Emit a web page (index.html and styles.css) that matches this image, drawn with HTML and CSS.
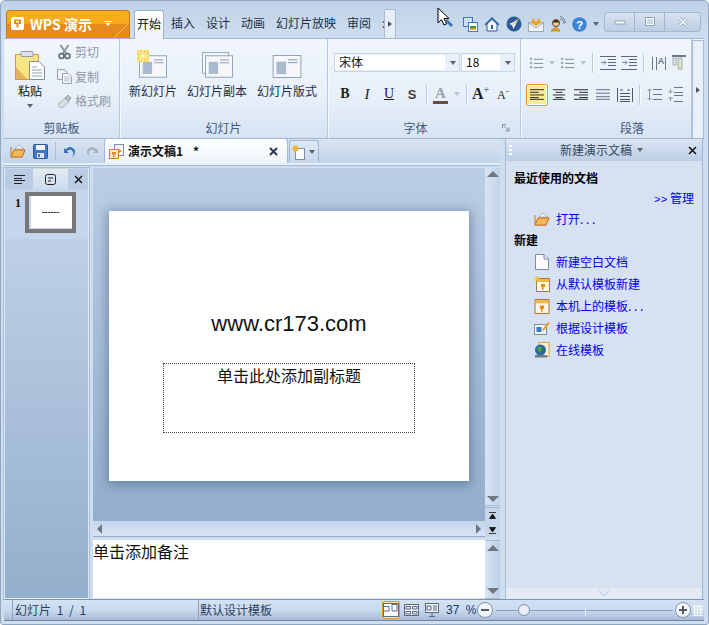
FILE: index.html
```html
<!DOCTYPE html>
<html lang="zh">
<head>
<meta charset="utf-8">
<title>WPS 演示</title>
<link rel="stylesheet" href="styles.css">
</head>
<body>
<svg class="defs" width="0" height="0">
  <defs>
    <symbol id="folder" viewBox="0 0 16 14"><path d="M1 3V13H12L15 6H4L2 12" fill="#f7c66a" stroke="#c8781c"/><path d="M5 5L9 1L14 5Z" fill="#fff" stroke="#8a99ad" stroke-width=".7"/><path d="M1 13L4 6H15L12 13Z" fill="#f5b858" stroke="#c8781c"/></symbol>
    <symbol id="slideicon" viewBox="0 0 30 24"><rect x=".5" y=".5" width="29" height="23" fill="#f5f7fb" stroke="#8d9fb8"/><rect x="4" y="7" width="10" height="13" fill="#a9b9d0"/><path d="M16 5h10M16 8h10" stroke="#8296b4"/></symbol>
    <symbol id="lines" viewBox="0 0 16 12"><path d="M0 .5H16M0 4.500H16M0 8.500H16M0 11.500H16" stroke="currentColor" fill="none"/></symbol>
    <symbol id="linesc" viewBox="0 0 16 12"><path d="M1 .5H15M4 3.500H12M1 6.500H15M4 9.500H12M1 11.500H15" stroke="currentColor" fill="none"/></symbol>
    <symbol id="linesl" viewBox="0 0 16 12"><path d="M0 .5H16M0 3.500H10M0 6.500H16M0 9.500H10M0 11.500H16" stroke="currentColor" fill="none"/></symbol>
    <symbol id="linesr" viewBox="0 0 16 12"><path d="M0 .5H16M6 3.500H16M0 6.500H16M6 9.500H16M0 11.500H16" stroke="currentColor" fill="none"/></symbol>
    <symbol id="bullets" viewBox="0 0 18 14"><path d="M1 2h3M2.500 .5v3M1 7h3M2.500 5.500v3M1 12h3M2.500 10.500v3" stroke="#7a8797"/><path d="M6 2.500H17M6 7.500H17M6 12.500H17" stroke="#6c7888"/></symbol>
    <symbol id="indent" viewBox="0 0 16 14"><path d="M0 .5H16M8 3.500H16M8 6.500H16M8 9.500H16M0 13.500H16" stroke="#59677a"/><path d="M1 6.500H6M4 4.500L6 6.500L4 8.500" stroke="#7a8797" fill="none"/></symbol>
    <symbol id="doc" viewBox="0 0 14 16"><path d="M.5 .5H9L13.500 5V15.500H.5Z" fill="#fbfcfe" stroke="#7d8da3"/><path d="M9 .5V5H13.500" fill="#dfe6ef" stroke="#7d8da3"/></symbol>
    <symbol id="tmpl" viewBox="0 0 14 14"><rect x=".5" y=".5" width="13" height="13" fill="#fff8e8" stroke="#a87c3c"/><rect x="1" y="1" width="12" height="3" fill="#f5b64a"/><path d="M5 6h4v3H7.500v3H6V9H5Z" fill="#e88c10"/></symbol>
  </defs>
</svg>

<div class="window">
  <header class="titlebar">
    <div class="appbtn">
      <span class="applogo"><svg width="13" height="13" viewBox="0 0 13 13"><rect width="13" height="13" rx="2" fill="#fff"/><path d="M3 2.500H10V7H7.500V10.500H5.500V7H3Z" fill="#e88c1a"/><rect x="5" y="4" width="3" height="1.500" fill="#fff"/></svg></span>
      <span class="appname">WPS 演示</span>
      <span class="apparrow"></span>
    </div>
    <nav class="tabs">
      <span class="tab active">开始</span>
      <span class="tab">插入</span>
      <span class="tab">设计</span>
      <span class="tab">动画</span>
      <span class="tab">幻灯片放映</span>
      <span class="tab">审阅</span>
      <span class="tabmore">:</span>
      <span class="tabnext"><i class="tri-right"></i></span>
    </nav>
    <div class="titleicons">
      <svg width="15" height="15" viewBox="0 0 15 15"><rect x=".5" y=".5" width="9" height="9" fill="#cfe0f5" stroke="#3d78c0"/><rect x="5.500" y="5.500" width="9" height="9" fill="#fff" stroke="#3d78c0"/><rect x="7" y="9" width="6" height="2" fill="#3a9a3a"/><rect x="7" y="11" width="6" height="2" fill="#e8a020"/></svg>
      <svg width="16" height="15" viewBox="0 0 16 15"><path d="M1 8L8 1L15 8" fill="none" stroke="#2c5f9e" stroke-width="1.500"/><path d="M3 7V14H13V7L8 2.500Z" fill="#f4f8fc" stroke="#2c5f9e"/><rect x="7" y="8" width="2" height="4" fill="#2c5f9e"/></svg>
      <svg width="16" height="16" viewBox="0 0 16 16"><circle cx="8" cy="8" r="7.500" fill="#2a5d96"/><path d="M12.500 3L6.500 6.500L3 8L6 9L7.500 13Z" fill="#f2f6fb"/><path d="M12.500 3L7 9" stroke="#e0a030"/></svg>
      <svg width="16" height="15" viewBox="0 0 16 15"><rect x=".5" y="5.500" width="15" height="9" fill="#eef1f6" stroke="#9aa8bb"/><path d="M1 6L8 11L15 6" fill="none" stroke="#9aa8bb"/><path d="M3 6L5 1L8 5L11 1L13 6L8 9Z" fill="#eda526"/></svg>
      <svg width="16" height="16" viewBox="0 0 16 16"><circle cx="6" cy="7" r="3.500" fill="#f3cf9d" stroke="#5a3b1c"/><path d="M2.500 6.500Q6 1 9.500 6.500" fill="#3a2a18"/><path d="M1 15Q6 8 10 15Z" fill="#e8a020" stroke="#8a5a10" stroke-width=".5"/><path d="M10 3A5 5 0 0 1 14 8M10 .5A8 8 0 0 1 15.500 7" fill="none" stroke="#6a7a90"/></svg>
      <svg width="15" height="15" viewBox="0 0 14 14"><circle cx="7" cy="7" r="6.800" fill="#3f86d6"/><text x="7" y="11" class="helpq" text-anchor="middle">?</text></svg>
      <i class="tri-down"></i>
    </div>
    <div class="winbtns">
      <span class="winbtn"><svg width="12" height="12" viewBox="0 0 12 12"><rect x="1" y="5" width="10" height="3" fill="#fff" stroke="#8ba2bf"/></svg></span>
      <span class="winbtn"><svg width="12" height="12" viewBox="0 0 12 12"><rect x="1.500" y="1.500" width="9" height="8" fill="none" stroke="#8ba2bf"/><rect x="2.500" y="2.500" width="7" height="6" fill="none" stroke="#fff"/></svg></span>
      <span class="winbtn"><svg width="12" height="12" viewBox="0 0 12 12"><path d="M2 2L10 10M10 2L2 10" stroke="#8ba2bf" stroke-width="3"/><path d="M2 2L10 10M10 2L2 10" stroke="#fff" stroke-width="1.500"/></svg></span>
    </div>
  </header>

  <section class="ribbon">
    <div class="group g-clip">
      <div class="groupbody clip-body">
        <div class="paste">
          <svg width="30" height="32" viewBox="0 0 30 32"><rect x=".5" y="4.500" width="23" height="25" fill="#f7e487" stroke="#d99a3c"/><path d="M1 29V17L12 29Z" fill="#e4b45c"/><rect x="6" y="1.500" width="12" height="5" rx="1" fill="#dfe4ea" stroke="#8d99a8"/><path d="M14.500 11.500H24L29.500 17V29.500H14.500Z" fill="#fff" stroke="#7d8da3"/><path d="M17 17H22M17 20H27M17 23H27M17 26H27" stroke="#8d9fb8"/></svg>
          <span class="pastelabel">粘贴</span>
          <i class="tri-down"></i>
        </div>
        <div class="cliplist">
          <div class="clipitem"><svg width="14" height="16" viewBox="0 0 14 16"><path d="M3 1L9 10M11 1L5 10" stroke="#8c96a3" stroke-width="2"/><circle cx="4" cy="12" r="2.500" fill="none" stroke="#5e6773" stroke-width="1.500"/><circle cx="10" cy="12" r="2.500" fill="none" stroke="#5e6773" stroke-width="1.500"/></svg><span>剪切</span></div>
          <div class="clipitem"><svg width="15" height="15" viewBox="0 0 15 15"><path d="M.5 .5H7L10 3V10.500H.5Z" fill="#eef1f5" stroke="#99a3af"/><path d="M5.500 4.500H11L14.500 8V14.500H5.500Z" fill="#f7f9fb" stroke="#99a3af"/><path d="M7 8H12M7 10H13M7 12H13" stroke="#b3bcc7"/></svg><span>复制</span></div>
          <div class="clipitem"><svg width="15" height="15" viewBox="0 0 15 15"><path d="M1 10L8 4L12 8L5 14Q2 14 1 10Z" fill="#d9dde2" stroke="#aab2bc"/><path d="M8 4L11 1L14 4L12 7Z" fill="#b9c0c9" stroke="#99a3af"/></svg><span>格式刷</span></div>
        </div>
      </div>
      <div class="grouplabel">剪贴板</div>
    </div>

    <div class="group g-slide">
      <div class="groupbody slide-body">
        <div class="bigbtn"><span class="iconbox"><svg width="28" height="23"><use href="#slideicon"/></svg><svg class="burst" width="12" height="12" viewBox="0 0 12 12"><rect width="12" height="12" fill="#f5d860"/><path d="M6 0V12M0 6H12M1 1L11 11M11 1L1 11" stroke="#fff6c0"/></svg></span><span>新幻灯片</span></div>
        <div class="bigbtn"><span class="iconbox stacked"><svg width="27" height="22"><use href="#slideicon"/></svg><svg class="front" width="28" height="23"><use href="#slideicon"/></svg></span><span>幻灯片副本</span></div>
        <div class="bigbtn"><span class="iconbox"><svg width="30" height="23"><use href="#slideicon"/></svg></span><span>幻灯片版式</span></div>
      </div>
      <div class="grouplabel">幻灯片</div>
    </div>

    <div class="group g-font">
      <div class="groupbody font-body">
        <div class="fontrow">
          <div class="combo c-name"><span class="comboval">宋体</span><i class="tri-down"></i></div>
          <div class="combo c-size"><span class="comboval">18</span><i class="tri-down"></i></div>
        </div>
        <div class="fontfmt">
          <b class="f-b">B</b><i class="f-i">I</i><u class="f-u">U</u><span class="f-s">S</span>
          <span class="sep"></span>
          <span class="f-color">A</span><i class="tri-down pale"></i>
          <span class="sep"></span>
          <span class="f-grow">A<sup>+</sup></span><span class="f-shrink">A<sup>-</sup></span>
        </div>
      </div>
      <div class="grouplabel label-font">字体<svg class="launcher" width="8" height="8" viewBox="0 0 8 8"><path d="M.5 4V.5H4M2 2L7 7M7 3.500V7H3.500" fill="none" stroke="#7b8da5"/></svg></div>
    </div>

    <div class="group g-para">
      <div class="groupbody para-body">
        <div class="pararow r1">
          <svg width="15" height="14"><use href="#bullets"/></svg><i class="tri-down pale"></i>
          <svg width="15" height="14"><use href="#bullets"/></svg><i class="tri-down pale"></i>
          <span class="sep"></span>
          <svg width="16" height="14"><use href="#indent"/></svg>
          <svg width="16" height="14"><use href="#indent"/></svg>
          <span class="sep"></span>
          <svg width="16" height="15" viewBox="0 0 16 15"><path d="M1.500 1V14M5.500 1V14M14.500 1V14" stroke="#6c7888"/><text x="10" y="8" class="miniA" text-anchor="middle">A</text></svg>
          <svg width="15" height="16" viewBox="0 0 15 16"><rect y="0" width="14" height="2" fill="#6c7888"/><rect x="1" y="3" width="3" height="7" fill="#e2e6ea" stroke="#8b95a2" stroke-width=".7"/><rect x="6" y="3" width="4" height="11" fill="#dde2c8" stroke="#8b95a2" stroke-width=".7"/></svg>
        </div>
        <div class="pararow r2">
          <span class="alignbtn on"><svg width="14" height="11"><use href="#linesl"/></svg></span>
          <span class="alignbtn"><svg width="14" height="11"><use href="#linesc"/></svg></span>
          <span class="alignbtn"><svg width="14" height="11"><use href="#linesr"/></svg></span>
          <span class="alignbtn mute"><svg width="14" height="11"><use href="#lines"/></svg></span>
          <span class="alignbtn mute"><svg width="16" height="14" viewBox="0 0 16 14"><path d="M.5 0V14M15.500 0V14M3 5.500H13M3 8.500H13M3 11.500H13M3 13.500H13M3 2H6M10 2H13" stroke="#4a5768" fill="none"/></svg></span>
          <span class="sep"></span>
          <svg class="gapicon" width="15" height="13" viewBox="0 0 15 13"><path d="M6 1.500H15M6 6.500H15M6 11.500H15" stroke="#6c7888"/><path d="M2.500 1V12M.5 3L2.500 1L4.500 3M.5 10L2.500 12L4.500 10" stroke="#8b95a2" fill="none"/></svg>
          <svg class="gapicon" width="15" height="16" viewBox="0 0 15 16"><path d="M6 .5H15M6 5.500H15M6 8.500H15M6 14.500H15" stroke="#6c7888"/><path d="M2.500 2V6M2.500 10V14M.5 4L2.500 6L4.500 4M.5 12L2.500 10L4.500 12" stroke="#8b95a2" fill="none"/></svg>
        </div>
      </div>
      <div class="grouplabel label-para">段落</div>
    </div>

    <div class="ribbonmore"><i class="tri-right"></i></div>
  </section>

  <div class="workspace">
    <div class="docside">
      <div class="doctabs">
        <div class="quick">
          <svg width="16" height="14"><use href="#folder"/></svg>
          <svg width="15" height="15" viewBox="0 0 15 15"><rect x=".5" y=".5" width="14" height="14" rx="1" fill="#3f78c8" stroke="#2a5a9e"/><rect x="3" y="1" width="9" height="5" fill="#eef3fa"/><rect x="4" y="9" width="7" height="5" fill="#dfe8f4"/><rect x="5" y="10" width="2" height="3" fill="#3f78c8"/></svg>
          <span class="qsep"></span>
          <svg width="13" height="13" viewBox="0 0 13 13"><path d="M1 3V8H6L4 6Q8 3 10 7Q11 9 9 12Q14 8 11 4Q7 0 2.500 4.500Z" fill="#3d74b8"/></svg>
          <svg class="redo" width="13" height="13" viewBox="0 0 13 13"><path d="M12 3V8H7L9 6Q5 3 3 7Q2 9 4 12Q-1 8 2 4Q6 0 10.500 4.500Z" fill="#a9b0b8"/></svg>
        </div>
        <div class="doctab">
          <svg width="15" height="15" viewBox="0 0 15 15"><rect x="5.500" y=".5" width="9" height="11" fill="#f3f6fa" stroke="#7f8fa5"/><rect x=".5" y="5.500" width="9" height="9" fill="#ffe9c8" stroke="#d8801c"/><path d="M3 8h4v2.500H5.500V13H4V10.500H3Z" fill="#e88c10"/><path d="M10 5L13 7L10 9Z" fill="#e88c10"/></svg>
          <span class="docname">演示文稿1</span><span class="docmark">*</span>
          <svg class="docx" width="9" height="9" viewBox="0 0 9 9"><path d="M1 1L8 8M8 1L1 8" stroke="#2a3a50" stroke-width="2"/></svg>
        </div>
        <div class="newtab">
          <svg width="14" height="15" viewBox="0 0 14 15"><rect x="3.500" y="3.500" width="9" height="11" fill="#fbfcfe" stroke="#7d8da3"/><circle cx="3.500" cy="3.500" r="3" fill="#f2b632"/></svg>
          <i class="tri-down"></i>
        </div>
      </div>

      <div class="docarea">
        <aside class="thumbs">
          <div class="thumbtabs">
            <span class="ttab"><svg width="11" height="9" viewBox="0 0 11 9"><path d="M0 .5H11M0 3.500H8M0 5.500H11M0 8.500H8" stroke="#222"/></svg></span>
            <span class="ttab active"><svg width="11" height="11" viewBox="0 0 11 11"><rect x=".5" y=".5" width="10" height="10" rx="2" fill="none" stroke="#222"/><path d="M3 4H8M3 7H6" stroke="#222"/></svg></span>
            <span class="ttab close"><svg width="9" height="9" viewBox="0 0 9 9"><path d="M1 1L8 8M8 1L1 8" stroke="#1a1a1a" stroke-width="1.500"/></svg></span>
          </div>
          <div class="thumblist">
            <span class="thumbnum">1</span>
            <div class="thumb"><div class="thumbpage"><span class="thumbtext"></span></div></div>
          </div>
        </aside>

        <main class="editor">
          <div class="stage-row">
            <div class="stage-col">
              <div class="stage">
                <div class="slide">
                  <div class="slidetitle">www.cr173.com</div>
                  <div class="slidesub">单击此处添加副标题</div>
                </div>
              </div>
              <div class="hscroll"><i class="tri-left"></i><i class="tri-right big"></i></div>
            </div>
            <div class="vscroll">
              <div class="vtrack"><i class="tri-up"></i><i class="tri-down big"></i></div>
              <div class="vpage"><svg width="7" height="7" viewBox="0 0 7 7"><path d="M0 .5H7M3.500 2L.5 6.500H6.500Z" stroke="#111" stroke-width=".8" fill="#111"/></svg><svg width="7" height="7" viewBox="0 0 7 7"><path d="M0 6.500H7M3.500 5L.5 .5H6.500Z" stroke="#111" stroke-width=".8" fill="#111"/></svg></div>
            </div>
          </div>
          <div class="notes-row">
            <div class="notes">单击添加备注</div>
            <div class="vscroll2"><i class="tri-up"></i><i class="tri-down big"></i></div>
          </div>
        </main>
      </div>
    </div>

    <aside class="taskpane">
      <div class="panehead">
        <span class="panegrip"></span>
        <span class="panetitle">新建演示文稿</span><i class="tri-down"></i>
        <svg class="paneclose" width="9" height="9" viewBox="0 0 9 9"><path d="M1 1L8 8M8 1L1 8" stroke="#111" stroke-width="1.500"/></svg>
      </div>
      <div class="panebody">
        <h2 class="panehd">最近使用的文档</h2>
        <div class="manage"><span class="dbl">&gt;&gt;</span> 管理</div>
        <a class="paneitem first"><svg width="16" height="14"><use href="#folder"/></svg><span>打开. . .</span></a>
        <h2 class="panehd second">新建</h2>
        <a class="paneitem"><svg width="14" height="16"><use href="#doc"/></svg><span>新建空白文档</span></a>
        <a class="paneitem"><svg width="16" height="16" viewBox="0 0 16 16"><use href="#tmpl" x="2" y="2" width="14" height="14"/><path d="M3 0V6M0 3H6M1 1L5 5M5 1L1 5" stroke="#f2c230"/></svg><span>从默认模板新建</span></a>
        <a class="paneitem"><svg width="14" height="15"><use href="#tmpl"/></svg><span>本机上的模板. . .</span></a>
        <a class="paneitem"><svg width="16" height="14" viewBox="0 0 16 14"><rect x=".5" y="3.500" width="12" height="10" fill="#f2f6fb" stroke="#7d8da3"/><rect x="2.500" y="6" width="5" height="5" fill="#3f78c8"/><path d="M8 9L14 1L15.500 2.500L9.500 10Z" fill="#e8a020"/></svg><span>根据设计模板</span></a>
        <a class="paneitem"><svg width="16" height="16" viewBox="0 0 16 16"><rect x="5" y=".5" width="10" height="14" fill="#fff2d0" stroke="#d8a040"/><circle cx="6.500" cy="8" r="5.500" fill="#2a6a9e"/><path d="M3 6Q6 3 8 7L6 11Z" fill="#5aa83c"/><rect x="1" y="13" width="12" height="2.500" fill="#6c7888"/></svg><span>在线模板</span></a>
        <div class="panespacer"></div>
        <div class="panefoot"><svg width="12" height="7" viewBox="0 0 12 7"><path d="M1 .5L6 6L11 .5" fill="none" stroke="#b4c3d8"/></svg></div>
      </div>
    </aside>
  </div>

  <footer class="statusbar">
    <span class="st st-page">幻灯片 1 / 1</span>
    <span class="st st-tmpl">默认设计模板</span>
    <span class="viewbtn on"><svg width="16" height="14" viewBox="0 0 16 14"><rect x=".5" y=".5" width="15" height="13" fill="#fff" stroke="#5a6a80"/><path d="M1 3.500H6V8H1M9 1.500H14V8H9Z" fill="none" stroke="#5a6a80"/></svg></span>
    <span class="viewbtn"><svg width="15" height="12" viewBox="0 0 15 12"><rect x=".5" y=".5" width="14" height="11" fill="#eef2f8" stroke="#5a6a80"/><path d="M2 2.500H6.500V5H2ZM8.500 2.500H13V5H8.500ZM2 7.500H6.500V10H2ZM8.500 7.500H13V10H8.500Z" fill="none" stroke="#5a6a80"/></svg></span>
    <span class="viewbtn"><svg width="14" height="14" viewBox="0 0 14 14"><rect x=".5" y=".5" width="13" height="9" fill="#eef2f8" stroke="#5a6a80"/><path d="M2 3H6V7H2ZM8 3H12M8 5H12M8 7H12M7 10V13M4 13.500H10" fill="none" stroke="#5a6a80"/></svg></span>
    <span class="zoompct">37 %</span>
    <span class="zoomcirc"><i class="minus"></i></span>
    <span class="slider"><span class="tick"></span><span class="thumbknob"></span></span>
    <span class="zoomcirc"><i class="plus"></i></span>
    <span class="grip"></span>
  </footer>

  <svg class="cursor" width="16" height="21" viewBox="0 0 16 21"><path d="M1 1V16L4.500 12.500L7 18L9.500 17L7 11.500H12Z" fill="#fff" stroke="#000"/><path d="M9 13L15 19" stroke="#3d74b8" stroke-width="3"/></svg>
</div>
</body>
</html>
```
FILE: styles.css
```css
* { box-sizing: border-box; }
html, body { margin: 0; padding: 0; }
body {
  width: 709px; height: 625px; overflow: hidden; background: #fff;
  font-family: "Noto Sans CJK SC", "Liberation Sans", sans-serif;
  font-size: 12px; line-height: 14px; color: #1f3550;
}
i { display: inline-block; font-style: normal; }
.defs { position: absolute; }
svg { display: block; flex: none; }

.tri-down { flex: none; width: 0; height: 0; border: 3px solid transparent; border-top: 4px solid #5a6472; border-bottom: 0; }
.tri-down.pale { border-top-color: #b9c3d0; }
.tri-down.big { border-width: 6px 6px 0; border-color: #6f7780 transparent transparent; border-style: solid; }
.tri-right { width: 0; height: 0; border-style: solid; border-width: 3px 0 3px 4px; border-color: transparent transparent transparent #4a5462; }
.tri-right.big { border-width: 5px 0 5px 5px; border-left-color: #6f7780; }
.tri-left { width: 0; height: 0; border-style: solid; border-width: 5px 5px 5px 0; border-color: transparent #6f7780 transparent transparent; }
.tri-up { width: 0; height: 0; border-style: solid; border-width: 0 6px 6px; border-color: transparent transparent #6f7780; }

.window {
  position: relative; width: 709px; height: 625px; display: flex; flex-direction: column;
  padding: 0 4px 3px 3px; border: 1px solid #8ea6c2; border-radius: 5px 5px 3px 3px;
  background: linear-gradient(#c0d2e8 0, #cfdeef 40px, #cfdeef 100%);
}
.titlebar { height: 37px; flex: none; display: flex; align-items: flex-end; padding-left: 2px; }
.appbtn {
  width: 124px; height: 28px; flex: none; display: flex; align-items: center; padding: 0 0 2px 4px; margin-right: 4px;
  border: 1px solid #c47a14; border-bottom: 0; border-radius: 4px 4px 0 0;
  background: linear-gradient(-45deg, transparent 10px, #f6c56a 10px, #f6c56a 11px, transparent 11px), linear-gradient(#f7b01f 0, #f5a81a 50%, #e88a1c 50%, #e68a1e 100%);
}
.appname { margin-left: 6px; color: #fff; font: bold 14px/16px "Noto Sans CJK SC", "Liberation Sans", sans-serif; white-space: nowrap; }
.apparrow { margin-left: 12px; width: 8px; height: 5px; border-top: 1px solid #fff; position: relative; flex: none; }
.apparrow::after { content: ""; position: absolute; left: 1px; top: 1px; border: 3px solid transparent; border-top: 3px solid #fff; border-bottom: 0; }
.tabs { height: 28px; flex: none; display: flex; align-items: flex-start; position: relative; z-index: 1; }
.tab { flex: none; height: 28px; line-height: 26px; margin-right: 11px; color: #1d2f48; white-space: nowrap; }
.tab.active {
  width: 30px; height: 29px; margin-right: 7px; text-align: center; color: #111;
  background: linear-gradient(#fff, #eef3fb); border: 1px solid #9db3cf; border-bottom: 0; border-radius: 3px 3px 0 0;
}
.tabmore { color: #333; width: 2px; line-height: 26px; flex: none; }
.tabnext { width: 12px; height: 29px; flex: none; margin-top: -1px; display: flex; align-items: center; justify-content: center; background: #e6eefa; border: 1px solid #a7bbd4; border-bottom: 0; border-radius: 2px 2px 0 0; }
.titleicons { display: flex; align-items: center; height: 18px; gap: 6px; margin: 0 0 5px auto; }
.helpq { font: bold 11px "Liberation Sans", sans-serif; fill: #fff; }
.winbtns { flex: none; display: flex; margin: 0 3px 6px 5px; height: 20px; border: 1px solid #a3b7d0; border-radius: 3px; background: linear-gradient(#d8e3f1, #bccde3); }
.winbtn { width: 30px; display: flex; align-items: center; justify-content: center; border-right: 1px solid #a3b7d0; }
.winbtn:last-child { width: 35px; border-right: 0; }

.ribbon { height: 100px; flex: none; display: flex; border-top: 1px solid #a3b9d3; background: linear-gradient(#f1f6fd 0, #e7eff9 60px, #d6e3f3 100%); }
.group { flex: none; display: flex; flex-direction: column; border-right: 1px solid #b7c9de; box-shadow: 1px 0 0 #f4f8fd; }
.groupbody { flex: 1; min-height: 0; }
.grouplabel { height: 20px; flex: none; line-height: 19px; text-align: center; color: #41587a; position: relative; }
.label-font { padding-right: 17px; }
.label-para { padding-left: 52px; }
.g-clip { width: 116px; }
.g-slide { width: 208px; }
.g-font { width: 193px; }
.g-para { width: 171px; }
.clip-body { display: flex; padding: 11px 0 0 11px; }
.paste { width: 30px; flex: none; display: flex; flex-direction: column; align-items: center; }
.pastelabel { color: #111; line-height: 18px; white-space: nowrap; }
.paste .tri-down { margin-top: 4px; }
.cliplist { margin: -6px 0 0 12px; display: flex; flex-direction: column; gap: 8.500px; }
.clipitem { display: flex; align-items: center; height: 16px; gap: 3px; color: #8e98a6; white-space: nowrap; }
.clipitem svg { width: 15px; }
.slide-body { display: flex; padding: 11px 0 0 9px; gap: 10px; }
.bigbtn { display: flex; flex-direction: column; align-items: center; color: #1d2f48; white-space: nowrap; }
.iconbox { position: relative; height: 30px; margin-bottom: 4px; display: block; padding-top: 5px; }
.burst { position: absolute; left: -2px; top: 0; }
.iconbox.stacked { padding-top: 2px; width: 31px; }
.iconbox.stacked .front { position: absolute; left: 3px; top: 5px; }
.font-body { padding: 14px 0 0 6px; }
.fontrow { display: flex; gap: 1px; }
.combo { height: 19px; flex: none; display: flex; align-items: center; border: 1px solid #c9d6e8; background: #e9f0f9; }
.comboval { flex: 1; height: 15px; line-height: 14px; background: #fff; padding-left: 4px; color: #111; margin-right: 5px; }
.combo .tri-down { margin-right: 3px; }
.c-name { width: 126px; }
.c-size { width: 54px; }
.fontfmt { display: flex; align-items: center; height: 22px; margin-top: 11px; color: #1c1c1c; }
.f-b, .f-i, .f-u, .f-s { width: 22px; flex: none; text-align: center; display: block; }
.f-b { font: bold 14px "Liberation Serif", serif; }
.f-i { font: italic 15px "Liberation Serif", serif; }
.f-u { font: 14px "Liberation Serif", serif; }
.f-s { margin-left: 1px; font: bold 13px "Liberation Sans", sans-serif; color: #4b3c36; }
.sep { width: 1px; height: 20px; background: #bccbdd; box-shadow: 1px 0 0 #f6f9fd; flex: none; }
.f-s + .sep { margin-left: 3px; }
.f-color { margin-left: 6px; width: 15px; flex: none; text-align: center; font: bold 15px/16px "Liberation Serif", serif; color: #9aa3ae; border-bottom: 3px solid #6b4a40; }
.fontfmt .tri-down.pale { margin: 0 6px; }
.f-grow { margin-left: 5px; width: 23px; flex: none; font: bold 16px "Liberation Serif", serif; color: #1a2030; white-space: nowrap; }
.f-shrink { font: 12px "Liberation Serif", serif; width: 16px; flex: none; margin: 3px 0 0 2px; color: #1a2030; white-space: nowrap; }
.fontfmt sup { font-size: 10px; line-height: 0; color: #3d78c0; }
.launcher { position: absolute; right: 10px; top: 6px; }
.para-body { padding: 15px 0 0 8px; }
.pararow { display: flex; align-items: center; }
.r1 { height: 18px; gap: 5px; }
.r1 .sep { margin: 0 2px 0 1px; }
.miniA { font: bold 9px "Liberation Sans", sans-serif; fill: #6c7888; }
.r2 { height: 23px; margin-top: 11px; margin-left: -3px; }
.alignbtn { width: 22px; height: 22px; flex: none; display: flex; align-items: center; justify-content: center; color: #111; border: 1px solid transparent; }
.alignbtn.on { border: 1px solid #e8952a; border-radius: 2px; background: #fcea9a; box-shadow: inset 0 0 0 1px #fff; }
.alignbtn.mute { color: #55606e; }
.r2 .sep { margin: 0 7px 0 3px; }
.gapicon { margin-right: 6px; }
.ribbonmore { width: 12px; flex: none; display: flex; align-items: center; justify-content: center; background: #e8eff9; border: 1px solid #a7bbd4; border-bottom: 0; margin-top: 1px; }

.workspace { flex: 1; min-height: 0; display: flex; border-top: 1px solid #a3b9d3; }
.docside { width: 496px; flex: none; display: flex; flex-direction: column; }
.doctabs { height: 26px; flex: none; display: flex; align-items: flex-end; background: linear-gradient(#d8e4f3, #c3d4e9); border-bottom: 2px solid #e6eef8; box-shadow: 0 1px 0 #a3b9d3; }
.quick { display: flex; align-items: center; gap: 7px; height: 24px; padding-left: 6px; width: 100px; flex: none; }
.redo { margin-left: 3px; }
.qsep { width: 1px; height: 18px; background: #adc0d8; }
.doctab { width: 184px; height: 25px; flex: none; display: flex; align-items: center; padding-left: 4px; background: linear-gradient(#fff, #eef3fb); border: 1px solid #a5b9d3; border-bottom: 0; border-radius: 3px 3px 0 0; }
.docname { margin-left: 4px; font-weight: 700; color: #111; white-space: nowrap; }
.docmark { margin-left: 10px; font-weight: 700; color: #111; }
.docx { margin-left: auto; margin-right: 9px; }
.newtab { width: 30px; height: 23px; flex: none; margin-left: 1px; display: flex; align-items: center; gap: 3px; padding-left: 2px; background: linear-gradient(#e0eaf6, #c6d6ea); border: 1px solid #9fb4cf; border-bottom: 0; border-radius: 3px 3px 0 0; }
.docarea { flex: 1; min-height: 0; display: flex; padding-top: 3px; }
.thumbs { width: 85px; flex: none; margin-right: 4px; border: 1px solid #dfe9f5; border-top: 0; background: linear-gradient(#c6d7ec, #94aecb); display: flex; flex-direction: column; box-shadow: 0 0 0 1px #a9bdd6; }
.thumbtabs { height: 20px; margin-top: 1px; display: flex; background: #b9cce3; flex: none; }
.ttab { width: 28px; flex: none; display: flex; align-items: center; justify-content: center; }
.ttab.active { width: 35px; background: linear-gradient(#e8efc8 0, #dfe8f4 2px, #cddcef); }
.ttab.close { width: 20px; }
.thumblist { display: flex; padding: 3px 0 6px 10px; gap: 4px; align-items: flex-start; background: #c4d6eb; }
.thumbnum { font: bold 12px/22px "Liberation Serif", serif; color: #111; width: 6px; }
.thumb { width: 51px; height: 41px; flex: none; background: #777; padding: 4px; }
.thumbpage { width: 100%; height: 100%; background: #fff; display: flex; align-items: center; justify-content: center; box-shadow: inset 0 -1px 0 #c7d6e8, inset 2px 0 0 #c7d6e8; }
.thumbtext { width: 17px; height: 1px; background: repeating-linear-gradient(90deg, #334 0 2px, #b0a080 2px 3px); }
.editor { flex: 1; min-width: 0; display: flex; flex-direction: column; }
.stage-row { height: 369px; flex: none; display: flex; }
.stage-col { flex: 1; min-width: 0; display: flex; flex-direction: column; }
.stage { flex: 1; min-height: 0; background: linear-gradient(#bbcee5, #93aecc); display: flex; justify-content: center; padding-top: 43px; }
.slide { width: 360px; height: 270px; flex: none; background: #fff; display: flex; flex-direction: column; align-items: center; box-shadow: 0 2px 10px 2px rgba(70, 95, 130, .55); }
.slidetitle { margin-top: 100px; height: 26px; font: 22px/26px "Liberation Sans", sans-serif; color: #111; white-space: nowrap; }
.slidesub { margin-top: 26px; width: 252px; height: 70px; flex: none; border: 1px dotted #444; text-align: center; font-size: 16px; line-height: 23px; color: #111; }
.hscroll { height: 16px; flex: none; display: flex; align-items: center; justify-content: space-between; padding: 0 4px; border-top: 1px solid #c6d6ea; border-bottom: 1px solid #94abc7; background: linear-gradient(#c6d6ec, #d8e4f4); }
.vscroll { width: 15px; flex: none; display: flex; flex-direction: column; }
.vtrack { flex: 1; min-height: 0; display: flex; flex-direction: column; justify-content: space-between; align-items: center; padding: 3px 0; background: linear-gradient(90deg, #d8e4f4, #c2d3e9); border-bottom: 1px solid #a3b9d3; }
.vpage { height: 30px; flex: none; display: flex; flex-direction: column; align-items: center; gap: 8px; padding-top: 4px; margin-top: 1px; background: #c6d6ea; border-top: 1px solid #a3b9d3; }
.notes-row { flex: 1; display: flex; min-height: 0; margin-top: 3px; }
.notes { flex: 1; background: #fff; font-size: 16px; line-height: 22px; color: #111; border-bottom: 1px solid #d8e4f1; }
.vscroll2 { width: 15px; flex: none; display: flex; flex-direction: column; align-items: center; justify-content: space-between; padding: 4px 0; background: linear-gradient(90deg, #d8e4f4, #bccee6); border: 1px solid #a8bcd6; border-width: 1px 0; }

.taskpane { flex: 1; min-width: 0; margin: 0 1px 0 5px; display: flex; flex-direction: column; border-left: 1px solid #a9bdd6; border-right: 1px solid #9db3cf; }
.panehead { height: 22px; flex: none; display: flex; align-items: center; padding-left: 3px; background: linear-gradient(#dbe6f4, #bccde5); color: #32475f; }
.panegrip { width: 3px; height: 11px; flex: none; background: repeating-linear-gradient(#fff 0 2px, transparent 2px 4px); }
.panetitle { margin-left: 48px; white-space: nowrap; }
.panehead .tri-down { margin-left: 5px; }
.paneclose { margin-left: auto; margin-right: 5px; }
.panebody { flex: 1; display: flex; flex-direction: column; min-height: 0; background: #d6e2f2; padding-top: 10px; }
.panehd { margin: 0 0 0 8px; font-size: 12px; font-weight: 700; line-height: 14px; color: #000; }
.panehd.second { margin-top: 6px; }
.manage { margin-top: 6px; padding-right: 8px; text-align: right; color: #0000f0; height: 14px; }
.dbl { font: 11px "Liberation Mono", monospace; }
.paneitem { display: flex; align-items: center; height: 16px; margin-top: 6px; padding-left: 28px; color: #0000f0; white-space: nowrap; }
.paneitem.first { margin-top: 6px; }
.paneitem svg { width: 16px; margin-right: 6px; }
.panehd.second + .paneitem { margin-top: 7px; }
.panespacer { flex: 1; }
.panefoot { height: 11px; flex: none; display: flex; justify-content: center; align-items: center; background: #e2eaf6; }

.statusbar { height: 22px; flex: none; display: flex; align-items: center; border-top: 1px solid #7d95b2; border-bottom: 1px solid #6d86a4; background: linear-gradient(#d4e2f3 0, #c9daef 50%, #a9bcd4 100%); color: #2b4160; }
.st { height: 100%; line-height: 19px; border-left: 1px solid #8ca2bc; flex: none; white-space: nowrap; }
.st-page { margin-left: 8px; width: 186px; padding-left: 2px; word-spacing: 3px; }
.st-tmpl { width: 184px; padding-left: 1px; }
.viewbtn { width: 17px; height: 18px; flex: none; display: flex; align-items: center; justify-content: center; margin-right: 3px; }
.viewbtn.on { width: 18px; border: 1px solid #e8952a; border-radius: 2px; background: #fbe9a6; }
.zoompct { margin-left: 3px; width: 31px; flex: none; color: #1f3a64; font: 12px "Liberation Sans", sans-serif; word-spacing: 3px; white-space: nowrap; }
.zoomcirc { width: 16px; height: 16px; flex: none; border-radius: 50%; border: 1px solid #7f93ab; background: #f0f4f9; position: relative; }
.minus, .plus { position: absolute; left: 3px; top: 6px; width: 8px; height: 2px; background: #5a5a5a; }
.plus::after { content: ""; position: absolute; left: 3px; top: -3px; width: 2px; height: 8px; background: #5a5a5a; }
.slider { width: 177px; flex: none; margin: 0 2px 0 3px; height: 1px; background: #8ca2bc; position: relative; }
.tick { position: absolute; left: 89px; top: -5px; width: 1px; height: 11px; background: #e0e8f2; }
.thumbknob { position: absolute; left: 22px; top: -6px; width: 12px; height: 12px; border-radius: 50%; background: #e9eff7; border: 1px solid #7f93ab; }
.grip { width: 10px; height: 11px; flex: none; margin-left: 2px; background: radial-gradient(#f4f8fc 1px, transparent 1.500px) 0 0 / 3px 3px; }
.cursor { position: absolute; left: 436px; top: 6px; }
```
